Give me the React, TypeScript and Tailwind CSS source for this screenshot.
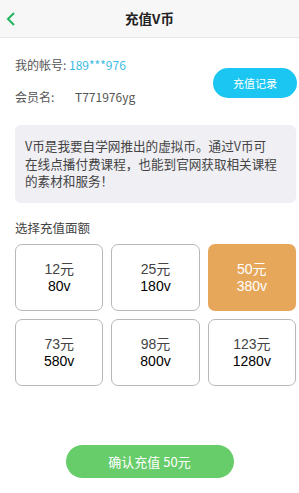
import { useState } from "react";

const amounts = [
  { yuan: 12, v: 80 },
  { yuan: 25, v: 180 },
  { yuan: 50, v: 380 },
  { yuan: 73, v: 580 },
  { yuan: 98, v: 800 },
  { yuan: 123, v: 1280 },
];

export default function App() {
  const [sel, setSel] = useState(2);
  const font = { fontFamily: '"Noto Sans CJK SC", "Liberation Sans", sans-serif' };

  return (
    <div className="w-[299px] h-[493px] bg-white flex flex-col text-[#333]" style={font}>
      <div className="h-[38px] bg-[#f7f7f7] border-b border-[#e6e6e6] flex items-center relative">
        <svg className="absolute left-[5px] top-[12px]" width="12" height="14" viewBox="0 0 12 14">
          <path d="M9 1 L3 7 L9 13" fill="none" stroke="#22b35e" strokeWidth="2" />
        </svg>
        <div className="flex-1 text-center text-[13.5px] font-bold text-[#222]">充值V币</div>
      </div>

      <div className="flex items-center pl-[15px] pr-[2px] mt-[17px]">
        <div className="flex-1 flex flex-col gap-[13px] text-[12px] text-[#555] leading-[19px]">
          <div>
            我的帐号: <span className="text-[#3cbce4]">189***976</span>
          </div>
          <div className="flex">
            <span className="w-[60px]">会员名:</span>
            <span>T771976yg</span>
          </div>
        </div>
        <button className="w-[84px] h-[30px] mt-[5px] rounded-full bg-[#1cc6f2] text-white text-[11px]">
          充值记录
        </button>
      </div>

      <div className="ml-[15px] mr-[3px] mt-[19px] h-[78px] rounded-[6px] bg-[#efeff4] pl-[10px] pr-[12px] pt-[12px] text-[12.6px] leading-[17.5px] text-[#444] whitespace-nowrap">
        V币是我要自学网推出的虚拟币。通过V币可
        <br />
        在线点播付费课程，也能到官网获取相关课程
        <br />
        的素材和服务！
      </div>

      <div className="pl-[15px] mt-[16px] text-[12.5px] leading-[18px] text-[#444]">选择充值面额</div>

      <div className="ml-[15px] mr-[3px] mt-[7px] grid grid-cols-3 gap-x-[8px] gap-y-[8px]">
        {amounts.map((a, i) => (
          <button
            key={i}
            onClick={() => setSel(i)}
            className={
              i === sel
                ? "h-[67px] rounded-[7px] bg-[#e6a75a] text-white flex flex-col items-center justify-center leading-[17px]"
                : "h-[67px] rounded-[7px] border border-[#b8b8b8] bg-white flex flex-col items-center justify-center leading-[17px]"
            }
            style={{ fontFamily: '"Liberation Sans", "Noto Sans CJK SC", sans-serif' }}
          >
            <span className={i === sel ? "text-[14px]" : "text-[14px] text-[#444]"}>
              {a.yuan}
              <span style={font}>元</span>
            </span>
            <span className={i === sel ? "text-[14px]" : "text-[14px] text-black"}>{a.v}v</span>
          </button>
        ))}
      </div>

      <div className="flex justify-center mt-[59px]">
        <button className="w-[168px] h-[33px] rounded-full bg-[#67cc6a] text-white text-[13px]">
          确认充值 {amounts[sel].yuan}元
        </button>
      </div>
    </div>
  );
}
